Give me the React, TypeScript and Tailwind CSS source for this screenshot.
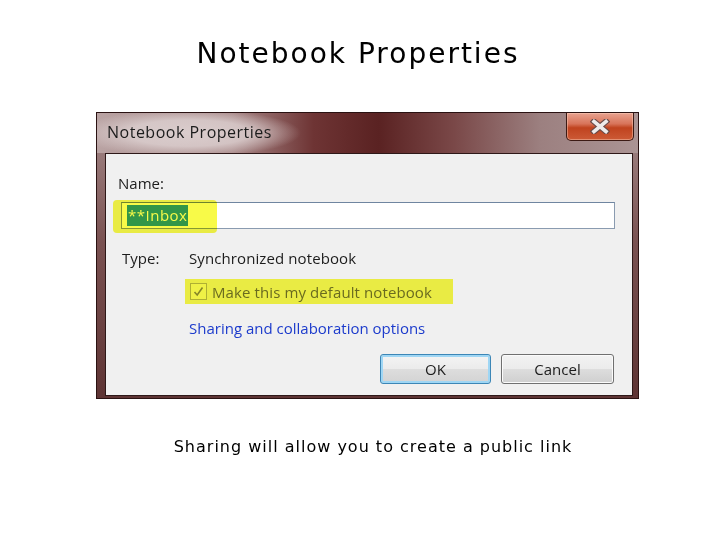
import React from "react";

function CloseGlyph() {
  return (
    <svg width="20" height="15" viewBox="0 0 20 15">
      <path d="M4 2.5 L16 12.5 M16 2.5 L4 12.5" stroke="#6b4a48" strokeWidth="6" strokeLinecap="square" />
      <path d="M4 2.5 L16 12.5 M16 2.5 L4 12.5" stroke="#eeeaea" strokeWidth="3.6" strokeLinecap="square" />
    </svg>
  );
}

function CheckMark() {
  return (
    <svg width="11" height="11" viewBox="0 0 11 11">
      <path d="M1.5 6 L4.2 9 L9.5 1.5" stroke="#8a8a8a" strokeWidth="1.6" fill="none" />
    </svg>
  );
}

export default function App() {
  return (
    <div className="w-[720px] h-[540px] bg-white flex flex-col font-['DejaVu_Sans',sans-serif] text-black overflow-hidden">
      <h1 className="mt-[37px] pr-[4px] text-center text-[28px] leading-[34px] tracking-[2px] font-normal">
        Notebook Properties
      </h1>

      {/* dialog */}
      <div className="mt-[41px] ml-[96px] w-[543px] h-[287px] flex flex-col border border-[#2a1212] bg-[linear-gradient(180deg,#a68c8c_0%,#7a5252_45%,#5e3434_100%)] font-['Open_Sans',sans-serif] text-[#1c1c1c]">
        <div className="h-[40px] shrink-0 flex items-start justify-between pl-[10px] pr-[4px] bg-[radial-gradient(ellipse_112px_24px_at_92px_20px,rgba(222,210,210,0.92)_0%,rgba(222,210,210,0.8)_55%,rgba(222,210,210,0)_100%),linear-gradient(90deg,#b9a3a3_0%,#a78787_25%,#6e3434_40%,#5a2222_52%,#7a4848_66%,#9c8080_82%,#ab9494_100%)]">
          <span className="mt-[9px] text-[16px] leading-[20px] tracking-[0.5px]">Notebook Properties</span>
          <div className="w-[68px] h-[28px] flex items-center justify-center rounded-b-[5px] border border-t-0 border-[#3c1a14] bg-[linear-gradient(180deg,#e8a290_0%,#d8745a_40%,#c0431f_55%,#cc5a36_100%)] shadow-[inset_0_0_0_1px_rgba(255,210,190,0.45)]">
            <CloseGlyph />
          </div>
        </div>

        <div className="flex-1 ml-[8px] mr-[5px] mb-[2px] border border-[#2e1818] bg-[#f0f0f0] flex flex-col text-[15px]">
          <div className="mt-[19px] pl-[12px] leading-[20px]">Name:</div>

          <div className="relative mt-[9px] ml-[15px] mr-[17px] h-[27px] border border-[#8a9bb0] border-t-[#6f85a0] bg-white flex items-center pl-[5px]">
            <span className="bg-[#3399ff] text-white leading-[21px] px-[1px] tracking-[0.5px]">**Inbox</span>
            <div className="absolute left-[-9px] top-[-3px] w-[104px] h-[33px] rounded-[4px] bg-[#f8fa48] mix-blend-multiply"></div>
          </div>

          <div className="mt-[19px] flex leading-[20px]">
            <span className="w-[83px] pl-[16px]">Type:</span>
            <span className="tracking-[0.1px]">Synchronized notebook</span>
          </div>

          <div className="mt-[11px] ml-[79px] w-[268px] h-[25px] relative flex items-center">
            <div className="ml-[5px] w-[17px] h-[17px] border border-[#b4b4b4] bg-[#f6f6f6] flex items-center justify-center">
              <CheckMark />
            </div>
            <span className="ml-[5px] text-[#6d6d6d] leading-[20px] tracking-[0.1px]">Make this my default notebook</span>
            <div className="absolute inset-0 bg-[#f8fa48] mix-blend-multiply"></div>
          </div>

          <div className="mt-[14px] pl-[83px] leading-[20px] text-[#1c3bcc]">
            Sharing and collaboration options
          </div>

          <div className="mt-[16px] pr-[18px] flex justify-end gap-[10px]">
            <button className="w-[111px] h-[30px] rounded-[3px] border border-[#3c86b6] shadow-[inset_0_0_0_2px_#9fd6f4] bg-[linear-gradient(180deg,#f4f4f4_0%,#ebebeb_50%,#dddddd_51%,#d3d3d3_100%)] text-[15px] leading-[20px]">
              OK
            </button>
            <button className="w-[113px] h-[30px] rounded-[3px] border border-[#707070] shadow-[inset_0_0_0_1px_#fbfbfb] bg-[linear-gradient(180deg,#f2f2f2_0%,#ebebeb_50%,#dddddd_51%,#cfcfcf_100%)] text-[15px] leading-[20px]">
              Cancel
            </button>
          </div>
        </div>
      </div>

      <p className="mt-[38px] pl-[26px] text-center text-[16px] leading-[20px] tracking-[1px]">
        Sharing will allow you to create a public link
      </p>
    </div>
  );
}
